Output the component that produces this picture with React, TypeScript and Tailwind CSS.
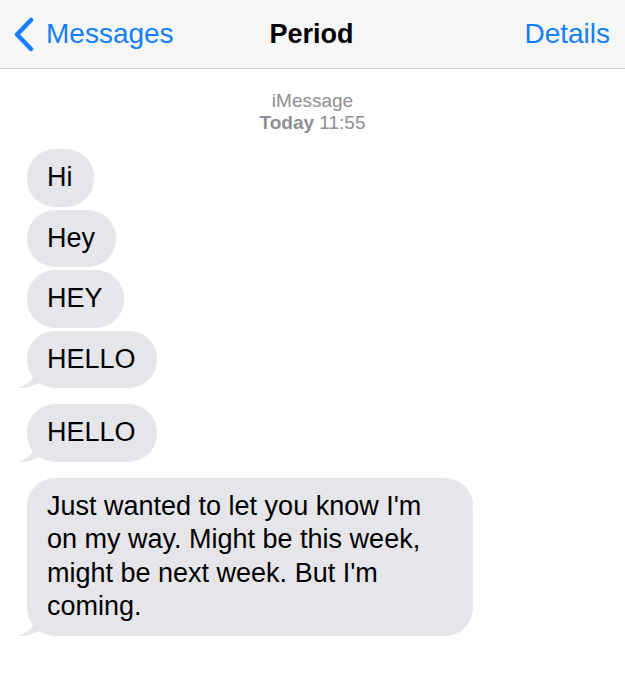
import type { ReactNode } from "react";

const FONT = { fontFamily: '"Liberation Sans", Arial, sans-serif' };

function Tail() {
  return (
    <svg
      className="absolute bottom-0 left-[-9px]"
      width="24"
      height="22"
      viewBox="0 0 24 22"
      fill="#e5e5ea"
    >
      <path d="M18 0 C18 9 14 17 0 22 C9 22 16 20 22 16 L24 0 Z" />
    </svg>
  );
}

function Bubble({ children, tail }: { children: ReactNode; tail?: boolean }) {
  return (
    <div className="relative self-start">
      {tail && <Tail />}
      <div className="relative rounded-[28px] bg-[#e5e5ea] pl-[20px] pr-[21px] py-[12px] text-[27px] leading-[33.5px] text-black">
        {children}
      </div>
    </div>
  );
}

export default function App() {
  return (
    <div className="min-h-[676px] w-[625px] bg-white" style={FONT}>
      <header className="grid h-[69px] grid-cols-[1fr_auto_1fr] items-center border-b border-[#cfcfd2] bg-[#f7f7f7] pl-[13px] pr-[15px]">
        <div className="flex items-center gap-[12px] text-[#157efb]">
          <svg width="21" height="35" viewBox="0 0 21 35" fill="none">
            <path d="M18 3 L4 17.5 L18 32" stroke="#157efb" strokeWidth="4.5" strokeLinecap="round" strokeLinejoin="round" />
          </svg>
          <span className="text-[28px] leading-none">Messages</span>
        </div>
        <div className="text-[27px] font-bold leading-none text-black">Period</div>
        <div className="justify-self-end text-[28px] leading-none text-[#157efb]">Details</div>
      </header>

      <div className="flex flex-col items-center pt-[21px] text-[19px] leading-[22px] text-[#8e8e93]">
        <span>iMessage</span>
        <span>
          <span className="font-bold">Today</span> 11:55
        </span>
      </div>

      <div className="flex flex-col pl-[27px] pt-[15px]">
        <div className="flex flex-col gap-[3px]">
          <Bubble>Hi</Bubble>
          <Bubble>Hey</Bubble>
          <Bubble>HEY</Bubble>
          <Bubble tail>HELLO</Bubble>
        </div>
        <div className="mt-[16px] flex flex-col">
          <Bubble tail>HELLO</Bubble>
        </div>
        <div className="mt-[16px] flex w-[446px] flex-col">
          <Bubble tail>
            Just wanted to let you know I'm on my way. Might be this week, might be next week. But I'm coming.
          </Bubble>
        </div>
      </div>
    </div>
  );
}
